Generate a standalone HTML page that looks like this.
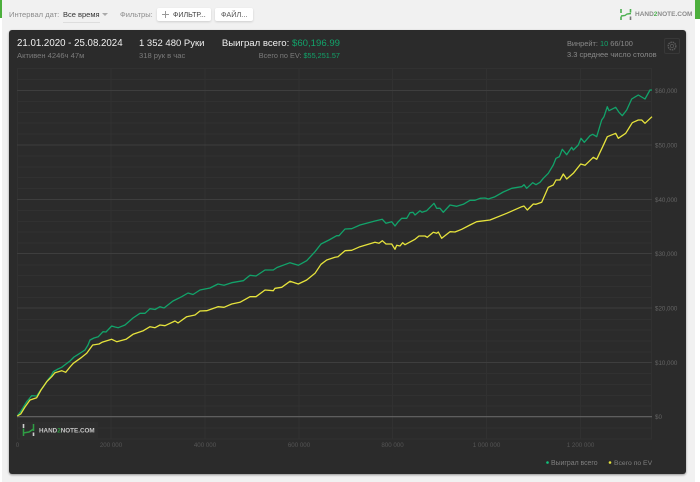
<!DOCTYPE html>
<html><head><meta charset="utf-8"><style>
html,body{margin:0;padding:0;background:#f1f1f1}
body{width:700px;height:482px;overflow:hidden;position:relative;background:#f1f1f1;font-family:"Liberation Sans","DejaVu Sans",sans-serif;filter:blur(.3px)}
div{position:absolute;white-space:nowrap}
.t{line-height:12px}
</style></head><body>
<div style="left:0;top:0;width:2px;height:482px;background:#fff"></div>
<div style="left:0;top:0;width:2px;height:18px;background:#4caf3c"></div>
<div style="left:695px;top:0;width:5px;height:482px;background:#fff"></div>
<div style="left:695px;top:0;width:5px;height:19px;background:#4caf3c"></div>
<div class="t" style="left:9px;top:9px;font-size:7.6px;color:#8c8c8c">Интервал дат:</div>
<div class="t" style="left:63px;top:9px;font-size:7.5px;color:#333;border-bottom:1px solid #ddd;padding-bottom:1px">Все время</div>
<div style="left:102px;top:13px;width:0;height:0;border-left:3px solid transparent;border-right:3px solid transparent;border-top:3px solid #aaa"></div>
<div class="t" style="left:120px;top:9px;font-size:7.5px;color:#8c8c8c">Фильтры:</div>
<div style="left:157px;top:8px;width:54px;height:13px;background:#fff;border-radius:2px;box-shadow:0 1px 2px rgba(0,0,0,.15)"></div>
<div style="left:162px;top:14px;width:7px;height:1px;background:#999"></div>
<div style="left:165px;top:11px;width:1px;height:7px;background:#999"></div>
<div class="t" style="left:173px;top:9px;font-size:7.1px;color:#444">ФИЛЬТР...</div>
<div style="left:215px;top:8px;width:38px;height:13px;background:#fff;border-radius:2px;box-shadow:0 1px 2px rgba(0,0,0,.15)"></div>
<div class="t" style="left:221px;top:9px;font-size:7.3px;color:#555">ФАЙЛ...</div>
<svg style="position:absolute;left:620px;top:9px" width="12" height="12" viewBox="0 0 12 12"><path d="M1 0V4M1 7.5V11" stroke="#4cb050" stroke-width="1.6" fill="none"/><path d="M10.5 0V3.5" stroke="#4cb050" stroke-width="1.6" fill="none"/><path d="M10.5 7.5V11" stroke="#777" stroke-width="1.6" fill="none"/><path d="M1 7L5 6.5L7 5L11 4.5" stroke="#4cb050" stroke-width="1.4" fill="none"/></svg>
<div class="t" style="left:635px;top:9px;font-size:6.5px;font-weight:bold;color:#8b8b8b">HAND<span style="color:#4cb050">2</span>NOTE.COM</div>

<div style="left:9px;top:30px;width:677px;height:444px;background:#2b2b2b;border-radius:3px;box-shadow:0 1px 2px rgba(0,0,0,.4)"></div>
<div class="t" style="left:17px;top:38px;font-size:9.7px;color:#f0f0f0">21.01.2020 - 25.08.2024</div>
<div class="t" style="left:17px;top:50px;font-size:7.6px;color:#7c7c7c">Активен 4246ч 47м</div>
<div class="t" style="left:139px;top:38px;font-size:9.5px;color:#f0f0f0">1 352 480 Руки</div>
<div class="t" style="left:139px;top:50px;font-size:7.6px;color:#7c7c7c">318 рук в час</div>
<div class="t" style="right:360px;top:38px;font-size:9.6px;color:#f0f0f0">Выиграл всего: <span style="color:#12a36a">$60,196.99</span></div>
<div class="t" style="right:360px;top:50px;font-size:7.3px;color:#7c7c7c">Всего по EV: <span style="color:#12a36a">$55,251.57</span></div>
<div class="t" style="left:567px;top:38px;font-size:7.4px;color:#8a8a8a">Винрейт: <span style="color:#12a36a">10</span> 66/100</div>
<div class="t" style="left:567px;top:49px;font-size:7.5px;color:#8a8a8a">3.3 среднее число столов</div>
<div style="left:664px;top:38px;width:14px;height:14px;border:1px solid #383838;border-radius:2px"></div>
<svg style="position:absolute;left:665px;top:39px" width="14" height="14" viewBox="0 0 14 14"><circle cx="7" cy="7" r="3.8" fill="none" stroke="#5a5a5a" stroke-width="1.4" stroke-dasharray="1.6 .7"/><circle cx="7" cy="7" r="1.7" fill="none" stroke="#5a5a5a" stroke-width=".8"/></svg>

<svg style="position:absolute;left:0;top:0" width="700" height="482" viewBox="0 0 700 482">
<g stroke="#313131" stroke-width="1" fill="none">
<path d="M17 68.5H652M17 79.5H652M17 101.5H652M17 112.5H652M17 123H652M17 134H652M17 156H652M17 167H652M17 177.5H652M17 188.5H652M17 210.5H652M17 221.5H652M17 232H652M17 243H652M17 265H652M17 275.5H652M17 286.5H652M17 297.5H652M17 319.5H652M17 330H652M17 341H652M17 352H652M17 373.5H652M17 384.5H652M17 395.5H652M17 406H652M17 428H652M17 439H652"/>
<path d="M17.5 68V439M111 68V439M205 68V439M299 68V439M392.5 68V439M486.5 68V439M580.5 68V439M651.5 68V439"/>
</g>
<path d="M17 90.5H652M17 145H652M17 199.5H652M17 253.5H652M17 308H652M17 362.5H652" stroke="#3e3e3e" stroke-width="1" fill="none"/>
<path d="M17 416.7H652" stroke="#666" stroke-width="1.2" fill="none"/>
<polyline fill="none" stroke="#12a36a" stroke-width="1.3" stroke-linejoin="round" points="17.3,416 21,411 26.7,401.7 29,399 31.7,395.7 36.7,396 40,391 43.3,386.7 48.3,379.3 51,376 53.3,371.7 58,369 61.7,367.3 66,364 70,361 74,357 78.3,354.3 85,350 88,345 90,340 94,338 98.3,336.7 103,331.7 106,332 111.7,326 115,327 118.3,327.7 125,325 133,318 140,313.3 145,313.3 150,308.7 155,309.5 160,306.7 164,308 173,301 181.7,296.7 188,293 193,294.5 200,290 210,288 218,284 224,285.3 231.7,282.7 243.3,280.7 250,275.3 256,276 265,270 273.3,270 277,267.5 290,262.7 298.3,265.3 306.7,260.7 315,251.7 321,244 329,240 336.7,235.7 339,235.7 345,229 351.7,228.7 360,225 375,221 382.3,219.3 386,223.3 391.7,221.7 395,226 398,222 401.7,218.3 406.7,218.3 410,212.7 413,212.3 415,215 420,210.7 422,212.3 426.7,210.7 434,203.3 436.7,208.3 440,208.3 443.3,212.3 450,205 456.7,206.3 463.3,204.3 470,200.3 475,200.3 480,198.3 485,198 488.3,199 495,196.7 503.3,192 511.7,188.3 521.7,186.7 524,184.7 526.7,188.3 532.7,182.7 536,184.7 540,182.3 543.3,178.3 548.3,173.3 553.3,165 556,158.3 559.3,156.7 562.3,149.3 566.7,154.7 571.7,147.3 573.3,150 578.3,145 581,138.3 584.3,142.3 590,135.7 592.7,134.3 596.7,136.7 601.7,120 604,116.7 607.3,106.7 609,110.7 615.7,107.3 619,112.3 622.3,115.7 626.7,110 631.7,99 638.3,95 645,99 650,90 652,90"/>
<polyline fill="none" stroke="#e6e33c" stroke-width="1.3" stroke-linejoin="round" points="17.3,416 20.7,414 25,407 30,400 36.7,397.7 41,390 46.7,381.7 51.7,376.7 55,372.7 61.7,370.7 65.7,372.3 70,367 73.3,363.3 81.7,357.3 86.7,353.3 92.7,345 99,344 102,342.3 111.7,339.3 116.7,341.7 126,339.3 133,334.3 143.3,330.7 150,326.7 155,327.7 160,325 165,325.7 175,321 178,323 186.7,316.7 195,315 200,311 206.7,310.7 218,306.7 224,307.3 231.7,304 240,302.3 250,296.7 256,296.7 265,290 273.3,290.7 275,288.3 281.7,287.3 290,281.3 298.3,284 306.7,280 315,273.3 321,264.3 326.7,260 335,257.3 338,256.7 345,250.7 351.7,250.3 360,246.7 375,242.3 379,243.3 382.3,240.7 386,244 391.7,244 395,249.3 396.7,245.3 400,246 402.7,242.7 405,244.7 415,239.3 419,236 425,236 427.3,237.3 433.3,232.3 436.7,233.3 438.3,232 441.7,238.3 450,231.7 455,232 461.7,229.3 470,225 476.7,221.7 490,220 506.7,213.3 521.7,206.7 524,206 527.3,210 533.3,204 536,204.3 541.7,202.3 548.3,187.3 553.3,185 556,180 560,180 563.3,174 566.7,179 573.3,173.3 580.7,164 585,165.3 593.3,157.3 596.7,159.3 602.7,146.7 607.3,136.7 615.7,133.3 618.3,138.3 625.7,133.3 632.3,122.7 638.3,120 641.7,120 645,123.3 652,116.7"/>
<g font-family="'Liberation Sans',sans-serif" font-size="6.2" fill="#646464">
<text x="655" y="93">$60,000</text><text x="655" y="147.5">$50,000</text><text x="655" y="202">$40,000</text><text x="655" y="256">$30,000</text><text x="655" y="310.5">$20,000</text><text x="655" y="365">$10,000</text><text x="655" y="419">$0</text>
<g fill="#555" text-anchor="middle"><text x="17.5" y="447">0</text><text x="111" y="447">200 000</text><text x="205" y="447">400 000</text><text x="299" y="447">600 000</text><text x="392.5" y="447">800 000</text><text x="486.5" y="447">1 000 000</text><text x="580.5" y="447">1 200 000</text></g>
</g>
<rect x="20" y="422" width="78" height="17" fill="#2e2e2e"/>
<path d="M23.5 424V428M33.5 432.5V436" stroke="#cfcfcf" stroke-width="1.6" fill="none"/>
<path d="M23.5 428.5V436M33.5 424V431M23 433L29 432L33.5 429" stroke="#2f9e44" stroke-width="1.5" fill="none"/>
<text x="39" y="432.5" font-family="'Liberation Sans',sans-serif" font-size="6.3" font-weight="bold" fill="#c8c8c8">HAND<tspan fill="#2f9e44">2</tspan>NOTE.COM</text>
<circle cx="547.5" cy="462.5" r="1.3" fill="#10c47c"/><circle cx="610" cy="462.5" r="1.3" fill="#e6e33c"/>
<text x="551" y="465" font-family="'Liberation Sans',sans-serif" font-size="6.9" fill="#7f7f7f">Выиграл всего</text>
<text x="614" y="465" font-family="'Liberation Sans',sans-serif" font-size="6.8" fill="#7f7f7f">Всего по EV</text>
</svg>
</body></html>
